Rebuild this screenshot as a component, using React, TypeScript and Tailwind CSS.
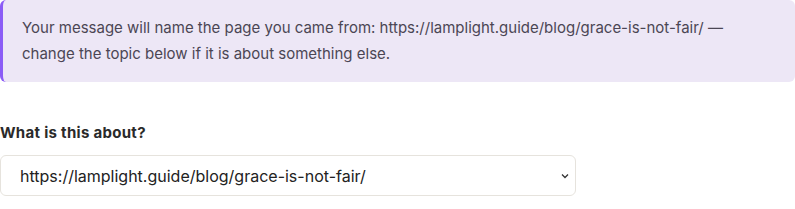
export default function App() {
  return (
    <div className="bg-white font-['Inter',sans-serif]">
      <div className="rounded-md border-l-[3px] border-[#8b5cf6] bg-[#ede7f6] py-[15px] pl-[19px] pr-5 text-[15px] leading-[26px] text-[#4b4654]">
        Your message will name the page you came from: https://lamplight.guide/blog/grace-is-not-fair/ —
        change the topic below if it is about something else.
      </div>
      <div className="mt-[41px]">
        <label className="mb-[12px] block text-[15px] font-bold leading-5 tracking-[0.3px] text-[#2a2a2a]">
          What is this about?
        </label>
        <div className="relative w-[576px]">
          <select className="h-[41px] w-full appearance-none rounded-md border border-[#e6e3dd] bg-white pl-[19px] pr-8 text-[16px] text-[#222]">
            <option>https://lamplight.guide/blog/grace-is-not-fair/</option>
          </select>
          <svg
            className="pointer-events-none absolute right-[6px] top-1/2 -translate-y-1/2"
            width="10"
            height="10"
            viewBox="0 0 10 10"
            fill="none"
            stroke="#333"
            strokeWidth="1.3"
          >
            <path d="M2 3.5l3 3 3-3" />
          </svg>
        </div>
      </div>
    </div>
  );
}
